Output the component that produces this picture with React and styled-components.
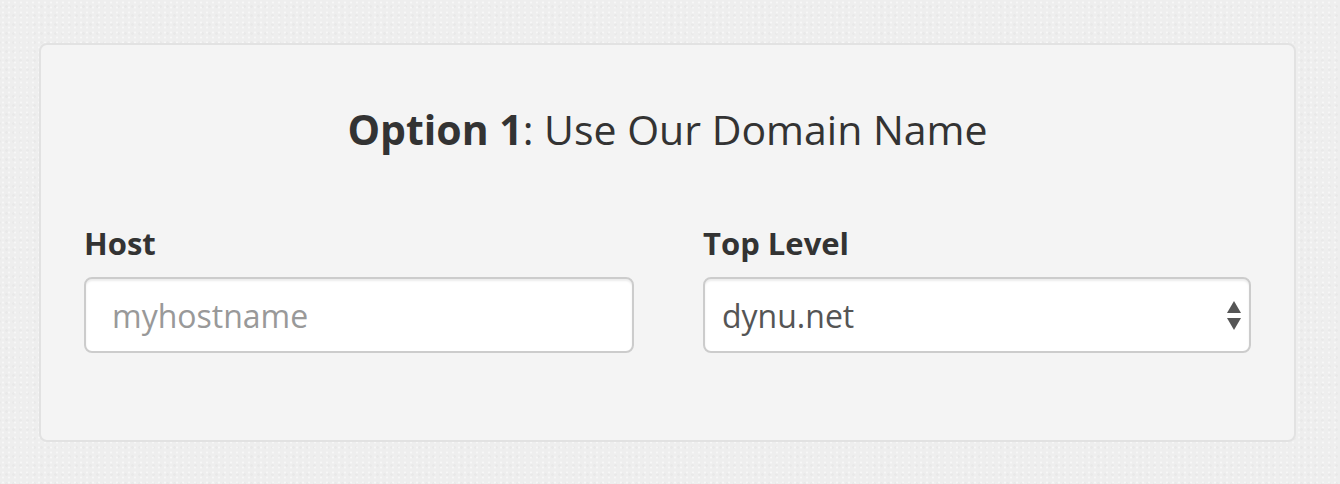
import React from 'react';
import styled, { createGlobalStyle } from 'styled-components';

const GlobalStyle = createGlobalStyle`
  html, body {
    margin: 0;
    padding: 0;
    background-color: #eeeeee;
    font-family: "Open Sans", "Liberation Sans", sans-serif;
  }
`;

const Page = styled.div`
  width: 1340px;
  height: 484px;
  box-sizing: border-box;
  padding: 43px 44px 0 39px;
  background-color: #eeeeee;
  background-image:
    radial-gradient(rgba(255, 255, 255, 0.5) 1px, transparent 1.5px),
    radial-gradient(rgba(0, 0, 0, 0.018) 1px, transparent 1.5px);
  background-size: 6px 5px, 7px 9px;
  background-position: 0 0, 3px 2px;
`;

const Card = styled.section`
  box-sizing: border-box;
  width: 1257px;
  height: 399px;
  padding: 59px 43px 0 43px;
  background-color: #f4f4f4;
  border: 2px solid #e2e2e2;
  border-radius: 8px;
`;

const Title = styled.h2`
  margin: 0;
  text-align: center;
  font-size: 41px;
  line-height: 50px;
  font-weight: 400;
  color: #333333;

  strong {
    font-weight: 700;
  }
`;

const Fields = styled.div`
  display: grid;
  grid-template-columns: 550px 548px;
  column-gap: 69px;
  margin-top: 72px;
`;

const Field = styled.div`
  display: flex;
  flex-direction: column;
`;

const Label = styled.label`
  font-size: 31px;
  line-height: 35px;
  font-weight: 700;
  color: #333333;
  margin-bottom: 16px;
`;

const inputBase = `
  box-sizing: border-box;
  width: 100%;
  height: 76px;
  margin: 0;
  background-color: #ffffff;
  border: 2px solid #cccccc;
  border-radius: 8px;
  box-shadow: inset 0 2px 2px rgba(0, 0, 0, 0.075);
  font-family: "Open Sans", "Liberation Sans", sans-serif;
  font-size: 32px;
  color: #555555;
  outline: none;
`;

const TextInput = styled.input`
  ${inputBase}
  padding: 0 26px;

  &::placeholder {
    color: #999999;
  }
`;

const SelectWrap = styled.div`
  position: relative;
`;

const Select = styled.select`
  ${inputBase}
  padding: 0 60px 0 17px;
  appearance: none;
  -webkit-appearance: none;
`;

const Arrows = styled.svg`
  position: absolute;
  right: 10px;
  top: 24px;
  width: 14px;
  height: 30px;
  pointer-events: none;
`;

export default function App() {
  return (
    <>
      <GlobalStyle />
      <Page>
        <Card>
          <Title>
            <strong>Option 1</strong>: Use Our Domain Name
          </Title>
          <Fields>
            <Field>
              <Label htmlFor="host">Host</Label>
              <TextInput id="host" type="text" placeholder="myhostname" />
            </Field>
            <Field>
              <Label htmlFor="tld">Top Level</Label>
              <SelectWrap>
                <Select id="tld" defaultValue="dynu.net">
                  <option value="dynu.net">dynu.net</option>
                </Select>
                <Arrows viewBox="0 0 14 30">
                  <path d="M7 0 L14 12 L0 12 Z" fill="#555555" />
                  <path d="M0 17 L14 17 L7 29 Z" fill="#555555" />
                </Arrows>
              </SelectWrap>
            </Field>
          </Fields>
        </Card>
      </Page>
    </>
  );
}
